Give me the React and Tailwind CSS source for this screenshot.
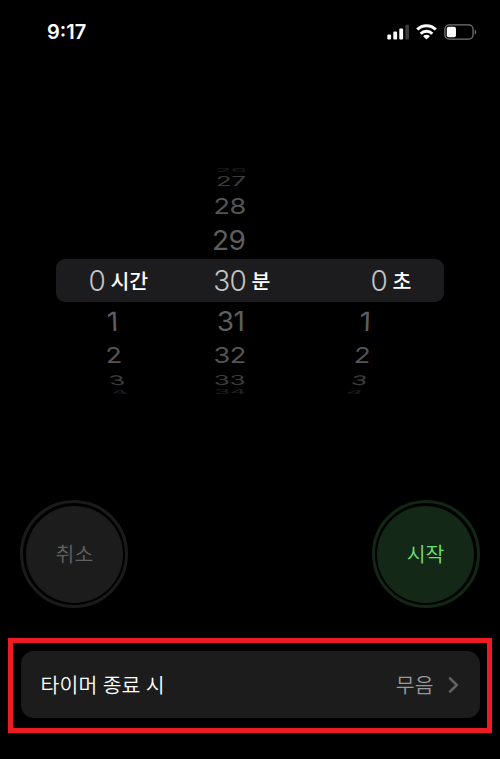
const sans = "font-['Inter','Noto_Sans_CJK_KR',sans-serif]"
const korean = "font-['Noto_Sans_CJK_KR',sans-serif]"

const rowsAbove = [
  { minute: '26', row: 'h-[5px] text-[#202020]', digit: 'scale-x-[0.92] scale-y-[0.17]' },
  { minute: '27', row: 'h-[19px] text-[#3c3c3c]', digit: 'translate-x-[-0.5px] -translate-y-px scale-x-[0.93] scale-y-[0.47]' },
  { minute: '28', row: 'h-[30px] text-[#545454]', digit: 'translate-x-[-0.5px] scale-x-[0.97] scale-y-[0.78]' },
  { minute: '29', row: 'h-[38px] text-[#5e5e5e]', digit: 'translate-x-[-0.5px] translate-y-[0.5px] scale-y-[0.95]' },
]

const rowsBelow = [
  {
    hour: '1', minute: '31', second: '1',
    row: 'h-[38px] text-[#5e5e5e]',
    digit: 'scale-y-[0.95]',
    middle: 'translate-x-[-1.5px]',
    left: 'translate-x-[13px] skew-x-2',
    right: 'translate-x-[-16.5px] -skew-x-2',
  },
  {
    hour: '2', minute: '32', second: '2',
    row: 'h-[30px] text-[#545454]',
    digit: 'scale-x-[0.97] scale-y-[0.78]',
    middle: 'translate-x-[-0.5px]',
    left: 'translate-x-[17px] skew-x-3',
    right: 'translate-x-[-16.5px] -skew-x-3',
  },
  {
    hour: '3', minute: '33', second: '3',
    row: 'h-[19px] text-[#3c3c3c]',
    digit: 'scale-x-[0.93] scale-y-[0.47]',
    middle: 'translate-x-[-0.5px]',
    left: 'translate-x-[19.5px] skew-x-6',
    right: 'translate-x-[-20px] -skew-x-6',
  },
  {
    hour: '4', minute: '34', second: '4',
    row: 'h-[5px] text-[#202020]',
    digit: 'scale-x-[0.92] scale-y-[0.2]',
    middle: 'translate-x-[-0.5px]',
    left: 'translate-x-[23px] skew-x-12',
    right: 'translate-x-[-24px] -skew-x-12',
  },
]

function StatusBar() {
  return (
    <header className="flex h-[63px] shrink-0 items-center justify-between pr-[23px] pl-[47px]">
      <span className="pt-px text-[20px] leading-none font-semibold">9:17</span>
      <div className="flex items-center gap-[7px]">
        <svg width="22" height="16" viewBox="0 0 22 16" fill="white">
          <rect x="0.3" y="10.4" width="3.8" height="5.1" rx="1.1" />
          <rect x="6.3" y="7.6" width="3.8" height="7.9" rx="1.1" />
          <rect x="12.3" y="4.4" width="3.8" height="11.1" rx="1.1" />
          <rect x="18.3" y="0.8" width="3.7" height="14.7" rx="1.1" fill="#3a3a3a" />
        </svg>
        <svg width="21" height="16" viewBox="0 0 21 16" fill="none" stroke="white" strokeWidth="3">
          <path d="M1.2 5.5a13.2 13.2 0 0 1 18.6 0" />
          <path d="M4.7 9.7a8.2 8.2 0 0 1 11.6 0" />
          <path d="M10.5 15.6 7.1 12.2a4.8 4.8 0 0 1 6.8 0z" fill="white" stroke="none" />
        </svg>
        <svg width="33" height="16" viewBox="0 0 33 16" fill="none">
          <rect x="0.9" y="0.8" width="28.2" height="14.4" rx="4.4" stroke="#757575" strokeWidth="1.3" />
          <rect x="2.8" y="2.8" width="9.2" height="10.4" rx="2" fill="white" />
          <path d="M30.8 5.4c1.8.8 1.8 4.4 0 5.2z" fill="#757575" />
        </svg>
      </div>
    </header>
  )
}

function WheelRow({ item }) {
  const cell = 'flex items-center justify-end'
  return (
    <div className={`flex shrink-0 items-center text-[28px] leading-none font-[370] tracking-[-0.5px] ${item.row}`}>
      <div className={`${cell} w-[105px]`}>
        <span className={`inline-block origin-right ${item.digit} ${item.left ?? ''}`}>{item.hour}</span>
      </div>
      <div className={`${cell} w-[141px]`}>
        <span className={`inline-block origin-right ${item.digit} ${item.middle ?? ''}`}>{item.minute}</span>
      </div>
      <div className={`${cell} w-[141px]`}>
        <span className={`inline-block origin-right ${item.digit} ${item.right ?? ''}`}>{item.second}</span>
      </div>
    </div>
  )
}

function Selected({ value, unit, width }) {
  return (
    <div className={`flex shrink-0 items-center justify-end ${width}`}>
      <span className="text-[28px] leading-none font-[360] tracking-[-0.5px] text-[#c4c4c4]">{value}</span>
      <span className={`-mr-[5px] w-0 pl-[5px] text-[20.5px] leading-none font-medium whitespace-nowrap text-white ${korean}`}>
        {unit}
      </span>
    </div>
  )
}

function TimePicker() {
  return (
    <section className="mt-[104px] flex h-[227px] shrink-0 flex-col overflow-hidden">
      {rowsAbove.map((item) => (
        <WheelRow key={item.minute} item={item} />
      ))}
      <div className="mr-[56.5px] ml-[56.4px] flex h-[43px] shrink-0 items-center rounded-[9px] bg-[#1c1c1e]">
        <Selected value="0" unit="시간" width="w-[49px]" />
        <Selected value="30" unit="분" width="w-[141px]" />
        <Selected value="0" unit="초" width="w-[141px]" />
      </div>
      {rowsBelow.map((item) => (
        <WheelRow key={item.minute} item={item} />
      ))}
    </section>
  )
}

function RoundButton({ label, ring, fill }) {
  return (
    <button className={`size-[108px] rounded-full border-3 p-[2.5px] ${ring}`}>
      <span
        className={`flex size-full items-center justify-center rounded-full pb-px text-[20.5px] leading-none font-[350] ${korean} ${fill}`}
      >
        {label}
      </span>
    </button>
  )
}

export default function App() {
  return (
    <main className={`flex h-[759px] w-[500px] flex-col overflow-hidden bg-black text-white ${sans}`}>
      <StatusBar />
      <TimePicker />
      <div className="mt-[106px] flex h-[108px] shrink-0 justify-between pr-[20.5px] pl-[20.4px]">
        <RoundButton label="취소" ring="border-[#1b1b1b]" fill="bg-[#1c1c1c] text-[#626264]" />
        <RoundButton label="시작" ring="border-[#122715]" fill="bg-[#132816] text-[#6fe07a]" />
      </div>
      <div className="mx-2 mt-[30px] h-[95px] shrink-0 border-[5px] border-[#ed1c24] px-[7.5px] pt-[8px]">
        <div
          className={`flex h-[67px] items-center justify-between rounded-[13px] bg-[#1c1c1c] pr-[21px] pl-[20px] text-[20.5px] leading-none font-[350] ${korean}`}
        >
          <span className="tracking-[0.1px] [word-spacing:0.6px]">타이머 종료 시</span>
          <div className="flex items-center gap-[14px] text-[#98989f]">
            <span>무음</span>
            <svg width="11" height="16" viewBox="0 0 11 16" fill="none" stroke="#636366" strokeWidth="2.5">
              <path d="m2 1.4 6.8 6.6L2 14.6" strokeLinecap="round" strokeLinejoin="round" />
            </svg>
          </div>
        </div>
      </div>
    </main>
  )
}
